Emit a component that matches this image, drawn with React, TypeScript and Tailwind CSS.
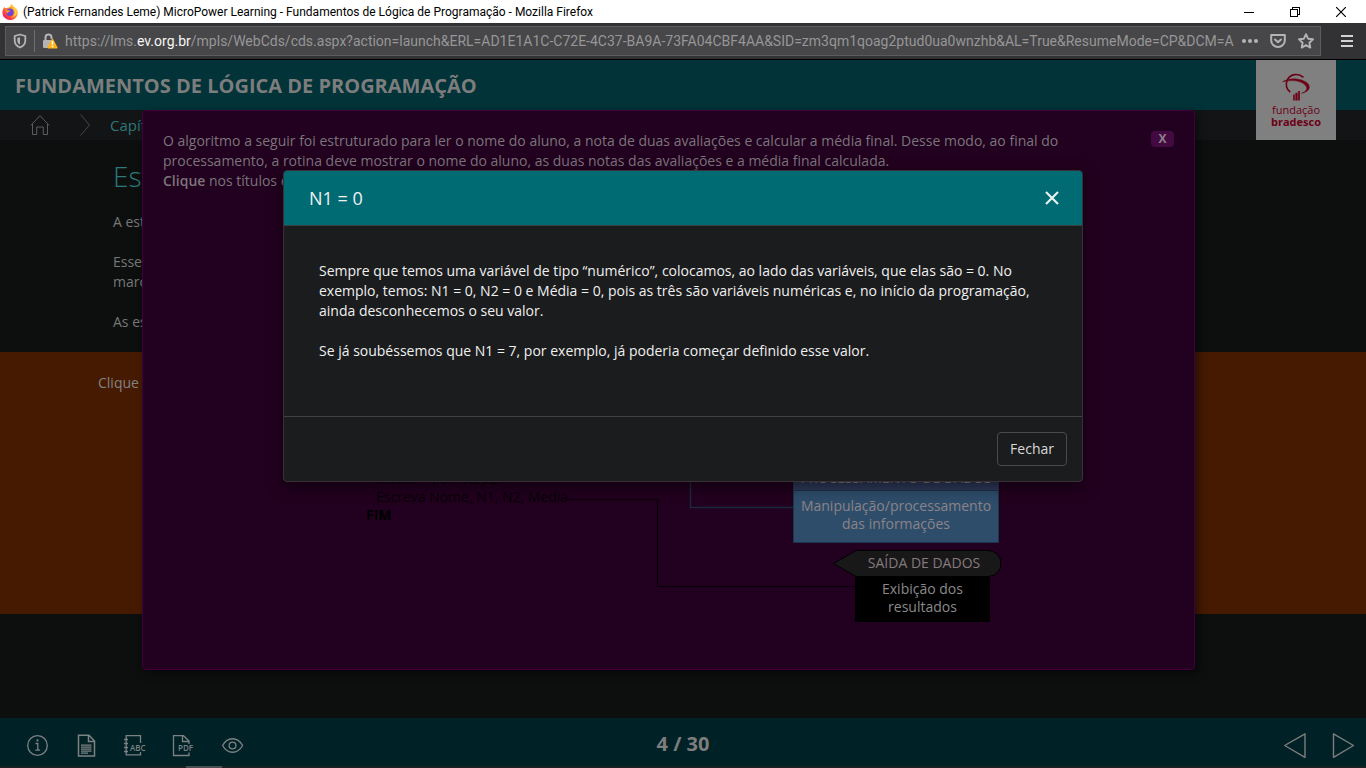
import React, { useState } from "react";

function FirefoxIcon() {
  return (
    <svg viewBox="0 0 16 16" className="size-4 shrink-0" aria-hidden="true">
      <defs>
        <linearGradient id="fx" x1="1" y1="0" x2="0.2" y2="1">
          <stop offset="0" stopColor="#fff04a" />
          <stop offset="0.4" stopColor="#ffa027" />
          <stop offset="0.75" stopColor="#ff4540" />
          <stop offset="1" stopColor="#e3156f" />
        </linearGradient>
      </defs>
      <path
        d="M9.2 0c1.1.7 1.7 1.6 2 2.5 2.6 1.2 4.6 3.4 4.6 6.2A7.6 7.3 0 0 1 .4 8.6c0-2.4.9-4.3 2-5.6l.8 1.3 1.5-.2C5.8 3.7 7.8 3.2 8.3 2.5 8.6 1.8 8.7.9 9.2 0z"
        fill="url(#fx)"
      />
      <circle cx="8" cy="8.3" r="3.7" fill="#6b45d8" />
      <path d="M4 6.2c1.5-.6 2.500 0 4 .2.5.9-.6 1.3-1.5 1.5-.7.5-.4 1.3-1.4 1.5C4.3 8.7 4 7.5 4 6.2z" fill="#ff9327" />
      <path d="M11.5 5c2.4 2.6 1.5 7-2.5 8.4 4 .2 6.6-3.2 5.6-6.8C14 5 12.7 3.5 11.2 2.8z" fill="#ffd03a" />
    </svg>
  );
}

function TitleBar() {
  return (
    <header className="flex h-[23px] shrink-0 items-center bg-white pl-[2px] text-black">
      <FirefoxIcon />
      <h1 className="ml-[5px] grow truncate font-['Roboto',sans-serif] text-[12px] leading-4">
        (Patrick Fernandes Leme) MicroPower Learning - Fundamentos de Lógica de Programação - Mozilla Firefox
      </h1>
      <button aria-label="Minimizar" className="grid h-5 w-[46px] place-items-center pr-1">
        <svg width="10" height="10" viewBox="0 0 10 10" shapeRendering="crispEdges"><path d="M0 5.5h10" stroke="#000" /></svg>
      </button>
      <button aria-label="Restaurar" className="grid h-5 w-[46px] place-items-center pr-1">
        <svg width="10" height="10" viewBox="0 0 10 10" fill="none" stroke="#000" shapeRendering="crispEdges">
          <path d="M.5 2.5h7v7h-7zM2.5 2.5v-2h7v7h-2" />
        </svg>
      </button>
      <button aria-label="Fechar janela" className="grid h-5 w-[46px] place-items-center pr-1">
        <svg width="10" height="10" viewBox="0 0 10 10" stroke="#000" strokeWidth="1.2"><path d="M0 0l10 10M10 0L0 10" /></svg>
      </button>
    </header>
  );
}

function AddressBar() {
  return (
    <div className="flex h-[37px] shrink-0 items-center border-b border-black bg-[#323234] pl-[5px]">
      <div className="flex h-[30px] min-w-0 grow items-center border border-[#5c5c5e] bg-[#474749] pr-[6px]">
        <svg viewBox="0 0 16 16" className="ml-[6px] size-4 shrink-0" fill="none" stroke="#b4b4b5" aria-hidden="true">
          <path d="M8 1.5 13.3 3v4.5c0 3.2-2.2 5.7-5.3 7-3.1-1.3-5.3-3.8-5.3-7V3z" strokeWidth="1.8" strokeLinejoin="round" />
          <path d="M8 4.2v7.4C6.3 10.7 5.3 9.2 5.3 7.4V4.9z" fill="#b4b4b5" stroke="none" />
        </svg>
        <span className="ml-[6px] h-[22px] w-px shrink-0 bg-[#6a7076]" />
        <svg viewBox="0 0 16 16" className="ml-[7px] size-4 shrink-0" aria-hidden="true">
          <path d="M3.5 8V4.5a3 3 0 0 1 6 0V6" fill="none" stroke="#b4b4b5" strokeWidth="2" />
          <rect x="1" y="7" width="9.5" height="8" rx="1" fill="#b4b4b5" />
          <path d="M10.5 6.5 14.8 14.7H6.2z" fill="#ffb318" stroke="#ffb318" strokeWidth="1.6" strokeLinejoin="round" />
          <path d="M10.5 8v3.6M10.5 12.7v1.5" stroke="#fff" strokeWidth="1.5" />
        </svg>
        <p className="ml-[7px] min-w-0 grow overflow-hidden whitespace-nowrap font-['Roboto',sans-serif] text-[14px] leading-5 text-[#969697]">
          https://lms.<span className="text-[#f5f5f5]">ev.org.br</span>
          /mpls/WebCds/cds.aspx?action=launch&amp;ERL=AD1E1A1C-C72E-4C37-BA9A-73FA04CBF4AA&amp;SID=zm3qm1qoag2ptud0ua0wnzhb&amp;AL=True&amp;ResumeMode=CP&amp;DCM=A
        </p>
        <div className="ml-[6px] flex shrink-0 items-center gap-3">
          <button aria-label="Ações da página">
            <svg viewBox="0 0 16 16" className="block size-4" fill="#b4b4b5"><circle cx="2" cy="8" r="2" /><circle cx="8" cy="8" r="2" /><circle cx="14" cy="8" r="2" /></svg>
          </button>
          <button aria-label="Salvar no Pocket">
            <svg viewBox="0 0 16 16" className="block size-4" fill="none" stroke="#b4b4b5" strokeWidth="2" strokeLinecap="round" strokeLinejoin="round">
              <path d="M1.2 2h13.6v5.5a6.8 6.5 0 0 1-13.6 0z" /><path d="M5 6.5l3 2.8 3-2.8" />
            </svg>
          </button>
          <button aria-label="Adicionar aos favoritos">
            <svg viewBox="0 0 16 16" className="block size-4" fill="none" stroke="#b4b4b5" strokeWidth="1.9" strokeLinejoin="round">
              <path d="M8 1.2l2.1 4.5 4.9.6-3.6 3.4.9 4.9L8 12.2l-4.3 2.4.9-4.9L1 6.3l4.9-.6z" />
            </svg>
          </button>
        </div>
      </div>
      <button aria-label="Abrir menu" className="grid w-[45px] shrink-0 place-items-center pl-[7px]">
        <svg width="12" height="12" viewBox="0 0 12 12" stroke="#d2d2d3" strokeWidth="2"><path d="M0 1h12M0 6h12M0 11h12" /></svg>
      </button>
    </div>
  );
}

function FundacaoLogo() {
  return (
    <a href="#fundacao" aria-label="Fundação Bradesco" className="absolute top-0 right-[30px] flex size-20 flex-col items-center bg-[#808080] pt-[13px] text-[#6c0017]">
      <svg viewBox="0 0 28 28" className="size-7" fill="none" stroke="currentColor">
        <path d="M21.5 4.3C16.5 0 8.5.8 5.5 6.5 3 11.5 4.5 16.5 8.3 19.2" strokeWidth="1.6" />
        <path d="M.6 8.8C4 6.5 10 5.2 16 6.2c8 1.4 12 5 11.2 8.8-.7 3-3.7 4.3-7.7 5.3 5.3-2 6.5-5 4-7.8C19.5 8 11 6.2.6 8.8z" fill="currentColor" strokeWidth=".5" />
        <path d="M12 21.5v6" strokeWidth="1.6" /><path d="M14.5 19.8v7.7" strokeWidth="2.2" /><path d="M17 18v9.5" strokeWidth="1.7" />
      </svg>
      <span className="mt-[3px] flex flex-col items-center text-[11px] leading-3">
        <span>fundação</span>
        <b>bradesco</b>
      </span>
    </a>
  );
}

function CourseHeader() {
  return (
    <div className="relative shrink-0">
      <div className="flex h-[50px] items-center bg-[#013338] pt-px pl-[15px]">
        <h2 className="text-[20px] leading-6 font-bold text-[#7d7d7d]">FUNDAMENTOS DE LÓGICA DE PROGRAMAÇÃO</h2>
      </div>
      <nav aria-label="Trilha" className="flex h-[30px] items-center bg-[#121415] pl-[30px]">
        <a href="#inicio" aria-label="Início">
          <svg viewBox="0 0 20 20" className="block size-5" fill="none" stroke="#5a5d5f" strokeLinejoin="round">
            <path d="M.7 10.5 10 .7l9.300 9.8M2.5 9v10.5h4.2V12h6.6v7.5h4.2V9" />
          </svg>
        </a>
        <svg viewBox="0 0 10 22" className="ml-[30px] h-[22px] w-[10px]" fill="none" stroke="#45484a"><path d="M.5.5 9.5 11 .5 21.5" /></svg>
        <a href="#capitulo" className="ml-5 text-[15px] text-[#2f7779]">Capítulo</a>
      </nav>
      <FundacaoLogo />
    </div>
  );
}

function Lesson() {
  return (
    <main className="grow bg-[#0c0f0e] text-[14px] leading-5 text-[#777777]">
      <article className="h-[212px] pt-4 pl-[113px]">
        <h3 className="text-[28px] leading-10 font-light text-[#2c787c]">Estrutura</h3>
        <p className="mt-4">A estrutura</p>
        <p className="mt-5">Esse<br />marcado</p>
        <p className="mt-5">As estruturas</p>
      </article>
      <section className="h-[262px] bg-[#461a00] pt-[21px] pl-[98px] text-[#828282]">Clique</section>
    </main>
  );
}

function CourseFooter() {
  return (
    <footer className="shrink-0 border-b-2 border-[#1a2224] bg-[#002126]">
      <div className="relative grid h-12 grid-cols-3 items-center text-[#7c8283]">
        <div className="flex items-center gap-[27px] pt-[7px] pl-[26px]">
          <button aria-label="Informações">
            <svg viewBox="0 0 22 22" className="block size-[22px]" fill="none" stroke="currentColor" strokeWidth="1.3">
              <circle cx="11.500" cy="10.5" r="9.800" /><path d="M9.5 8.5h2.3V15M9.3 15.2h4.8" /><circle cx="11.5" cy="5.4" r="1.1" fill="currentColor" stroke="none" />
            </svg>
          </button>
          <button aria-label="Transcrição">
            <svg viewBox="0 0 22 22" className="block size-[22px] overflow-visible" fill="none" stroke="currentColor" strokeWidth="1.5">
              <path d="M3.5.2H14L19.5 6v15H3.5zM13.5.2V6.5h6" /><path d="M6 10.2h10.5M6 12.2h10.5M6 14.2h10.5M6 16.2h10.5M6 18.2h7" strokeWidth="1.3" />
            </svg>
          </button>
          <button aria-label="Glossário">
            <svg viewBox="0 0 22 22" className="block size-[22px] overflow-visible" fill="none" stroke="currentColor" strokeWidth="1.3">
              <path d="M16.5 8V.7H2.2v19.2h14.3V17M0 4.5h4M0 8.5h4M0 12.5h4M0 16.5h4" />
              <text x="6" y="16.2" fontFamily="Open Sans" fontSize="8" fontWeight="600" fill="currentColor" stroke="none">ABC</text>
            </svg>
          </button>
          <button aria-label="Baixar PDF">
            <svg viewBox="0 0 22 22" className="block size-[22px] overflow-visible" fill="none" stroke="currentColor" strokeWidth="1.3">
              <path d="M16 9V6L10.5.7H.5V20.5H16V17.5M9.5.7V6.5H16" />
              <text x="5" y="16.2" fontFamily="Open Sans" fontSize="8" fontWeight="600" fill="currentColor" stroke="none">PDF</text>
            </svg>
          </button>
          <button aria-label="Acessibilidade">
            <svg viewBox="0 0 22 22" className="block size-[22px]" fill="none" stroke="currentColor" strokeWidth="1.3">
              <path d="M.6 10.5C5.5 1.5 15.5 1.5 20.6 10.5 15.5 19.5 5.5 19.5.6 10.5z" /><circle cx="10.5" cy="10.5" r="3.4" />
            </svg>
          </button>
        </div>
        <p className="pt-1 text-center text-[20px] leading-6 font-bold text-[#7d7d7d]">4 / 30</p>
        <div className="flex justify-end gap-[26px] pt-[7px] pr-3">
          <button aria-label="Anterior">
            <svg viewBox="0 0 22 26" className="block h-[26px] w-[22px]" fill="none" stroke="#7d7d7d" strokeWidth="1.4" strokeLinejoin="round"><path d="M21 .8v23.500L.7 12.5z" /></svg>
          </button>
          <button aria-label="Próximo">
            <svg viewBox="0 0 22 26" className="block h-[26px] w-[22px]" fill="none" stroke="#7d7d7d" strokeWidth="1.4" strokeLinejoin="round"><path d="M1.5.8v23.500L21.5 12.5z" /></svg>
          </button>
        </div>
        <span className="absolute -bottom-0.5 left-[186px] h-0.5 w-9 bg-[#4a4f50]" />
      </div>
    </footer>
  );
}

function AlgorithmDiagram() {
  return (
    <div className="absolute top-[349px] left-[222px] h-[180px] w-[660px] text-[14px] leading-[18px]">
      <svg className="absolute inset-0" width="660" height="180" viewBox="0 0 660 180" fill="none">
        <path d="M325.5 0v47.5H428" stroke="#1a2a3c" strokeWidth="1.5" />
        <path d="M203 39.5h89.5v87H490" stroke="#080007" />
        <path d="M468.5 103.5 491 90.5h132a13 13 0 0 1 0 26H491z" fill="#181818" stroke="#000" />
      </svg>
      <p className="absolute top-[10px] left-[11px] whitespace-nowrap text-[#060006]">Media = (N1+N2)/2</p>
      <p className="absolute top-[28px] left-[11px] whitespace-nowrap text-[#060006]">Escreva Nome, N1, N2, Media</p>
      <p className="absolute top-[46px] left-px font-bold text-black">FIM</p>
      <div className="absolute top-0 left-[428px] w-[206px] border border-[#1f3450] bg-[#2e4d6a] text-center text-[#8b8388]">
        <p className="h-[30px] border-b border-[#1f3048] bg-[#2d3a5a] pt-[8px]">PROCESSAMENTO DE DADOS</p>
        <p className="h-[51px] whitespace-nowrap pt-[6px]">Manipulação/processamento<br />das informações</p>
      </div>
      <p className="absolute top-[94px] left-[491px] w-[136px] text-center whitespace-nowrap text-[#85787f]">SAÍDA DE DADOS</p>
      <p className="absolute top-[117px] left-[490px] h-[45px] w-[135px] bg-black pt-[3px] text-center font-medium text-[#8a8a8a]">
        Exibição dos<br />resultados
      </p>
    </div>
  );
}

function AlgorithmDialog() {
  return (
    <section aria-label="Algoritmo" className="absolute top-[50px] right-[171px] left-[142px] h-[560px] rounded border border-[#41003d] bg-[#22001f] px-5 pt-5 text-[14px] leading-5 text-[#7a757a] shadow-[3px_3px_8px_rgba(0,0,0,0.5)]">
      <div className="flex items-start justify-between">
        <p className="max-w-[920px]">
          O algoritmo a seguir foi estruturado para ler o nome do aluno, a nota de duas avaliações e calcular a média final. Desse modo, ao final do processamento, a rotina deve mostrar o nome do aluno, as duas notas das avaliações e a média final calculada.
          <br />
          <b className="font-semibold">Clique</b> nos títulos e
        </p>
        <button aria-label="Fechar algoritmo" className="h-4 w-[23px] shrink-0 rounded-sm bg-[#430a42] text-[12px] leading-4 font-bold text-[#8c8089]">X</button>
      </div>
      <AlgorithmDiagram />
    </section>
  );
}

function VariableModal({ onClose }: { onClose: () => void }) {
  return (
    <div role="dialog" aria-labelledby="modal-title" className="absolute inset-x-0 top-[110px] mx-auto w-[800px] max-w-full overflow-hidden rounded border border-[#3a3038] bg-[#1b1c1d] text-[#f0f0f0] shadow-[0_5px_15px_rgba(0,0,0,0.5)]">
      <div className="flex h-[55px] items-center justify-between border-b border-[#3a3f40] bg-[#016b74] pr-[22px] pl-[25px]">
        <h4 id="modal-title" className="text-[18px] leading-6">N1 = 0</h4>
        <button onClick={onClose} aria-label="Fechar" className="p-px">
          <svg width="14" height="14" viewBox="0 0 14 14" stroke="#e9f0f0" strokeWidth="2.2"><path d="M1 1l12 12M13 1 1 13" /></svg>
        </button>
      </div>
      <div className="h-[190px] px-[35px] pt-[35px] text-[14px] leading-5">
        <p>
          Sempre que temos uma variável de tipo “numérico”, colocamos, ao lado das variáveis, que elas são = 0. No exemplo, temos: N1 = 0, N2 = 0 e Média = 0, pois as três são variáveis numéricas e, no início da programação, ainda desconhecemos o seu valor.
        </p>
        <p className="mt-5">Se já soubéssemos que N1 = 7, por exemplo, já poderia começar definido esse valor.</p>
      </div>
      <div className="flex justify-end border-t border-[#3f4142] p-[15px]">
        <button onClick={onClose} className="h-[34px] rounded-[4px] border border-[#484b4d] px-3 text-[14px] leading-5 text-[#d8d8d8]">Fechar</button>
      </div>
    </div>
  );
}

export default function App() {
  const [open, setOpen] = useState(true);
  return (
    <div className="flex min-h-screen flex-col overflow-hidden bg-[#0c0f0e]">
      <TitleBar />
      <AddressBar />
      <div className="relative flex grow flex-col font-['Open_Sans',sans-serif]">
        <CourseHeader />
        <Lesson />
        <CourseFooter />
        <AlgorithmDialog />
        {open && <VariableModal onClose={() => setOpen(false)} />}
      </div>
    </div>
  );
}
